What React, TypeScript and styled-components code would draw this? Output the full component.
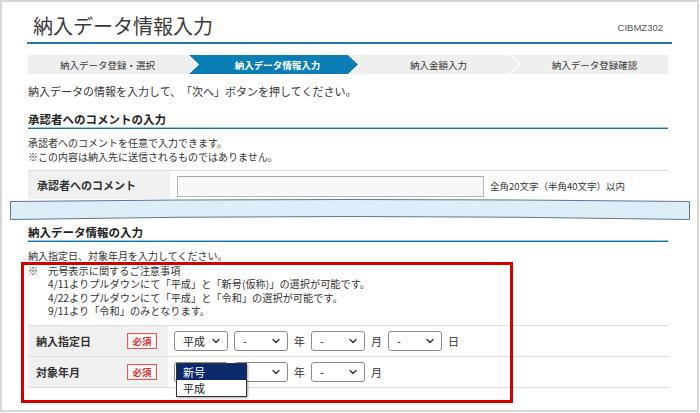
import React from "react";
import styled, { createGlobalStyle } from "styled-components";
import { ChevronDown } from "lucide-react";

const GlobalStyle = createGlobalStyle`
  html, body {
    margin: 0;
    padding: 0;
    background: #fff;
  }
  body {
    font-family: "Noto Sans CJK JP", "Noto Sans", sans-serif;
    color: #333;
    text-spacing-trim: space-all;
  }
  * {
    box-sizing: border-box;
  }
`;

const steps = [
  "納入データ登録・選択",
  "納入データ情報入力",
  "納入金額入力",
  "納入データ登録確認",
];

const notes = [
  "4/11よりプルダウンにて「平成」と「新号(仮称)」の選択が可能です。",
  "4/22よりプルダウンにて「平成」と「令和」の選択が可能です。",
  "9/11より「令和」のみとなります。",
];

const Select = ({ value }: { value: string }) => (
  <SelectBox>
    <span>{value}</span>
    <ChevronDown size={12} strokeWidth={2.8} color="#333" />
  </SelectBox>
);

export default function App() {
  return (
    <>
      <GlobalStyle />
      <Frame>
        <Content>
          <TitleRow>
            <Title>納入データ情報入力</Title>
            <ScreenId>CIBMZ302</ScreenId>
          </TitleRow>

          <StepBar>
            {steps.map((label, i) => (
              <Step
                key={label}
                $active={i === 1}
                $first={i === 0}
                $last={i === steps.length - 1}
              >
                {label}
              </Step>
            ))}
          </StepBar>

          <Lead>納入データの情報を入力して、「次へ」ボタンを押してください。</Lead>

          <SectionTitle $top={12}>承認者へのコメントの入力</SectionTitle>
          <Description $top={7}>
            承認者へのコメントを任意で入力できます。
            <br />
            ※この内容は納入先に送信されるものではありません。
          </Description>

          <CommentRow>
            <CommentLabel>承認者へのコメント</CommentLabel>
            <CommentInput />
            <Hint>全角20文字（半角40文字）以内</Hint>
          </CommentRow>

          <CutBand viewBox="0 0 680 22" preserveAspectRatio="none">
            <path
              d="M0.5 2.5 Q340 -1.5 679.5 2.5 L679.5 20.5 Q340 14.5 0.5 20.5 Z"
              fill="#deeef8"
              stroke="#5b7894"
              strokeWidth="1"
            />
          </CutBand>

          <SectionTitle $top={3}>納入データ情報の入力</SectionTitle>
          <Description $top={7}>納入指定日、対象年月を入力してください。</Description>

          <Notes>
            <NoteLine>
              <NoteMark>※</NoteMark>元号表示に関するご注意事項
            </NoteLine>
            {notes.map((n) => (
              <NoteLine key={n} $indent>
                {n}
              </NoteLine>
            ))}
          </Notes>

          <FormTable>
            <FormRow>
              <LabelCell>
                納入指定日
                <Required>必須</Required>
              </LabelCell>
              <ValueCell>
                <Select value="平成" />
                <Select value="-" />
                <Unit>年</Unit>
                <Select value="-" />
                <Unit>月</Unit>
                <Select value="-" />
                <Unit>日</Unit>
              </ValueCell>
            </FormRow>
            <FormRow>
              <LabelCell>
                対象年月
                <Required>必須</Required>
              </LabelCell>
              <ValueCell>
                <SelectHolder>
                  <Select value="平成" />
                  <OptionList>
                    <Option $selected>新号</Option>
                    <Option>平成</Option>
                  </OptionList>
                </SelectHolder>
                <Select value="-" />
                <Unit>年</Unit>
                <Select value="-" />
                <Unit>月</Unit>
              </ValueCell>
            </FormRow>
          </FormTable>
        </Content>
        <Highlight />
      </Frame>
    </>
  );
}

const Frame = styled.div`
  position: relative;
  width: 699px;
  height: 412px;
  border: 2px solid #d6d6d6;
  padding-left: 26px;
  overflow: hidden;
`;

const Content = styled.div`
  width: 640px;
`;

const TitleRow = styled.div`
  display: flex;
  justify-content: space-between;
  align-items: center;
  height: 44px;
  margin: -2px -4px 0 -1px;
  padding: 9px 9px 0 6px;
  border-bottom: 2px solid #1b77b6;
`;

const Title = styled.h1`
  margin: 0;
  font-size: 20px;
  font-weight: normal;
  line-height: 24px;
  color: #3a3a3a;
`;

const ScreenId = styled.span`
  font-family: "Liberation Sans", Arial, sans-serif;
  font-size: 9.5px;
  color: #555;
  padding-top: 3px;
`;

const StepBar = styled.div`
  display: flex;
  height: 19px;
  margin-top: 11px;
`;

const Step = styled.div<{ $active?: boolean; $first?: boolean; $last?: boolean }>`
  flex: 0 0 ${({ $last }) => ($last ? "157px" : "169px")};
  margin-left: ${({ $first }) => ($first ? "0" : "-8px")};
  display: flex;
  align-items: center;
  justify-content: center;
  padding: ${({ $first, $last }) =>
    $first ? "0 10px 0 0" : $last ? "0 0 0 10px" : "0 2px 0 10px"};
  font-size: 9.5px;
  font-weight: ${({ $active }) => ($active ? "bold" : "normal")};
  color: ${({ $active }) => ($active ? "#fff" : "#333")};
  background: ${({ $active }) => ($active ? "#0b7db5" : "#efefef")};
  clip-path: ${({ $first, $last }) =>
    $first
      ? "polygon(0 0, calc(100% - 10px) 0, 100% 50%, calc(100% - 10px) 100%, 0 100%)"
      : $last
      ? "polygon(0 0, 100% 0, 100% 100%, 0 100%, 10px 50%)"
      : "polygon(0 0, calc(100% - 10px) 0, 100% 50%, calc(100% - 10px) 100%, 0 100%, 10px 50%)"};
`;

const Lead = styled.p`
  margin: 9px 0 0;
  font-size: 11px;
  line-height: 16px;
`;

const SectionTitle = styled.h2<{ $top: number }>`
  margin: ${({ $top }) => $top}px 0 0;
  font-size: 11.5px;
  font-weight: bold;
  line-height: 16px;
  color: #222;
  border-bottom: 1px solid #1a6fa8;
  box-shadow: inset 0 -1px 0 #8fcbe0;
  padding-bottom: 1px;
`;

const Description = styled.p<{ $top: number }>`
  margin: ${({ $top }) => $top}px 0 0;
  font-size: 10px;
  line-height: 14px;
`;

const CommentRow = styled.div`
  display: flex;
  align-items: flex-start;
  margin-top: 6px;
  height: 29px;
  border-top: 1px solid #dedede;
`;

const CommentLabel = styled.div`
  flex: 0 0 142px;
  height: 100%;
  padding: 6px 0 0 9px;
  background: #f0f0f0;
  font-size: 11px;
  font-weight: bold;
  line-height: 16px;
`;

const CommentInput = styled.div`
  width: 307px;
  height: 21px;
  margin: 5px 0 0 7px;
  border: 1px solid #b8b8b8;
  border-top-color: #a8a8a8;
  background-color: #f7f7f7;
  background-image: radial-gradient(#e9e9e9 0.6px, transparent 0.7px);
  background-size: 2px 2px;
`;

const Hint = styled.span`
  margin: 9px 0 0 6px;
  font-size: 9.5px;
  line-height: 12px;
`;

const CutBand = styled.svg`
  display: block;
  width: 680px;
  height: 22px;
  margin: 0 0 0 -18px;
`;

const Notes = styled.div`
  margin-top: 1px;
  font-size: 10.2px;
  line-height: 13.3px;
`;

const NoteLine = styled.div<{ $indent?: boolean }>`
  padding-left: ${({ $indent }) => ($indent ? "20px" : "0")};
  white-space: nowrap;
`;

const NoteMark = styled.span`
  display: inline-block;
  width: 20px;
`;

const FormTable = styled.div`
  margin-top: 8px;
  border-bottom: 1px solid #dedede;
`;

const FormRow = styled.div`
  display: flex;
  height: 31px;
  border-top: 1px solid #dedede;
`;

const LabelCell = styled.div`
  flex: 0 0 140px;
  display: flex;
  align-items: center;
  justify-content: space-between;
  padding: 0 11px 0 8px;
  background: #f0f0f0;
  font-size: 11px;
  font-weight: bold;
`;

const Required = styled.span`
  width: 30px;
  height: 16px;
  display: flex;
  align-items: center;
  justify-content: center;
  border: 1px solid #e05a5a;
  box-shadow: inset 0 0 0 1px #fbe4e4;
  background: #fff;
  color: #d83333;
  font-size: 9.5px;
  font-weight: bold;
`;

const ValueCell = styled.div`
  display: flex;
  align-items: center;
  gap: 6px;
  padding-left: 6px;
`;

const SelectHolder = styled.div`
  position: relative;
`;

const SelectBox = styled.div`
  width: 54px;
  height: 20px;
  display: flex;
  align-items: center;
  justify-content: space-between;
  padding: 0 5px 0 8px;
  border: 1px solid #8c8c8c;
  border-radius: 3px;
  background: #fff;
  font-size: 11px;
  color: #222;
`;

const Unit = styled.span`
  font-size: 11px;
  color: #333;
`;

const OptionList = styled.div`
  position: absolute;
  left: 2px;
  top: 1px;
  width: 71px;
  border: 1px solid #333;
  background: #fff;
  box-shadow: 1px 1px 2px rgba(0, 0, 0, 0.35);
  z-index: 2;
`;

const Option = styled.div<{ $selected?: boolean }>`
  height: 16px;
  padding-left: 6px;
  font-size: 11px;
  line-height: 16px;
  color: ${({ $selected }) => ($selected ? "#fff" : "#111")};
  background: ${({ $selected }) => ($selected ? "#0c2a6c" : "#fff")};
`;

const Highlight = styled.div`
  position: absolute;
  left: 19px;
  top: 260px;
  width: 492px;
  height: 141px;
  border: 3px solid #d40000;
  pointer-events: none;
`;
